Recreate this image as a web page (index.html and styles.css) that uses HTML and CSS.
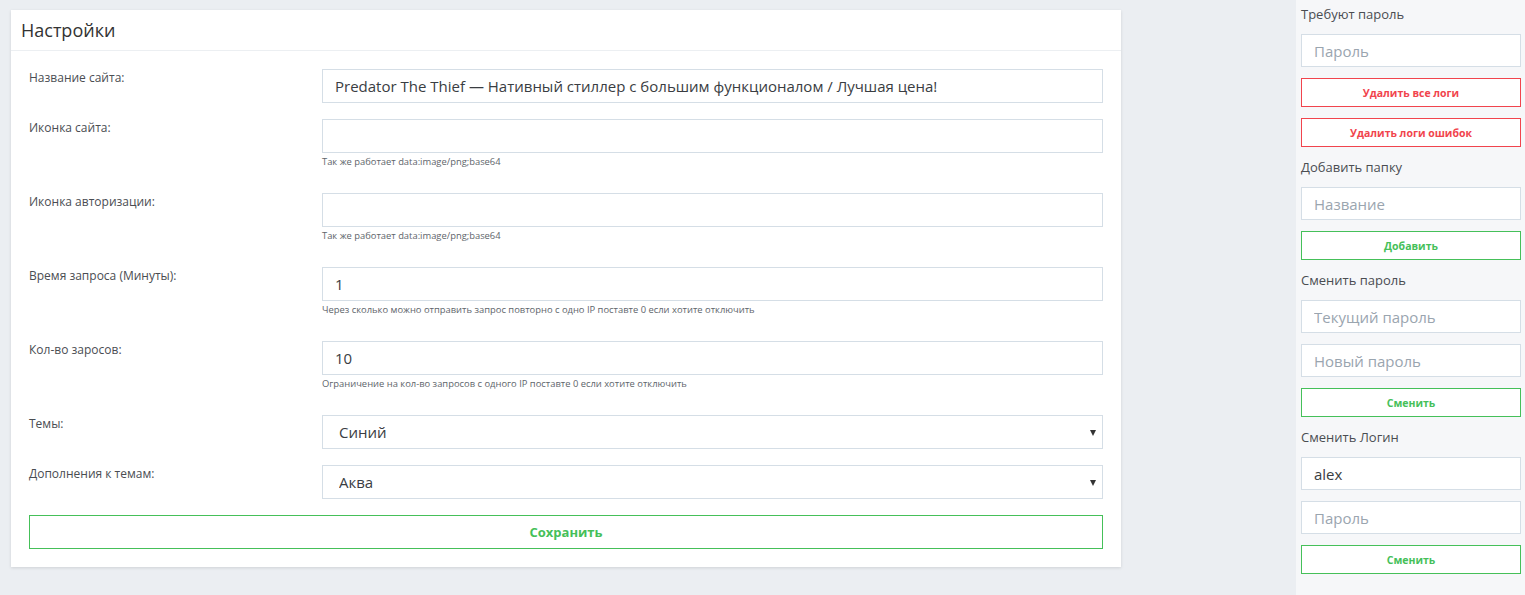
FILE: index.html
```html
<!DOCTYPE html>
<html lang="ru">
<head>
<meta charset="utf-8">
<title>Настройки</title>
<link rel="stylesheet" href="styles.css">
</head>
<body>
<div class="layout">
  <main class="main">
    <section class="card">
      <header class="card-head">Настройки</header>
      <form class="card-body">
        <div class="row">
          <label class="row-label">Название сайта:</label>
          <div class="field"><input class="input" type="text" value="Predator The Thief — Нативный стиллер с большим функционалом / Лучшая цена!"></div>
        </div>
        <div class="row">
          <label class="row-label">Иконка сайта:</label>
          <div class="field"><input class="input" type="text" value=""><small class="help">Так же работает data:image/png;base64</small></div>
        </div>
        <div class="row">
          <label class="row-label">Иконка авторизации:</label>
          <div class="field"><input class="input" type="text" value=""><small class="help">Так же работает data:image/png;base64</small></div>
        </div>
        <div class="row">
          <label class="row-label">Время запроса (Минуты):</label>
          <div class="field"><input class="input" type="text" value="1"><small class="help">Через сколько можно отправить запрос повторно с одно IP поставте 0 если хотите отключить</small></div>
        </div>
        <div class="row">
          <label class="row-label">Кол-во заросов:</label>
          <div class="field"><input class="input" type="text" value="10"><small class="help">Ограничение на кол-во запросов с одного IP поставте 0 если хотите отключить</small></div>
        </div>
        <div class="row">
          <label class="row-label">Темы:</label>
          <div class="field"><div class="select-wrap"><select class="input select"><option>Синий</option></select></div></div>
        </div>
        <div class="row">
          <label class="row-label">Дополнения к темам:</label>
          <div class="field"><div class="select-wrap"><select class="input select"><option>Аква</option></select></div></div>
        </div>
        <button type="button" class="btn btn-green btn-save">Сохранить</button>
      </form>
    </section>
  </main>
  <aside class="sidebar">
    <div class="side-label">Требуют пароль</div>
    <input class="input side-input" type="password" placeholder="Пароль">
    <button type="button" class="btn btn-red side-btn">Удалить все логи</button>
    <button type="button" class="btn btn-red side-btn">Удалить логи ошибок</button>
    <div class="side-label">Добавить папку</div>
    <input class="input side-input" type="text" placeholder="Название">
    <button type="button" class="btn btn-green side-btn">Добавить</button>
    <div class="side-label">Сменить пароль</div>
    <input class="input side-input" type="password" placeholder="Текущий пароль">
    <input class="input side-input" type="password" placeholder="Новый пароль">
    <button type="button" class="btn btn-green side-btn">Сменить</button>
    <div class="side-label">Сменить Логин</div>
    <input class="input side-input" type="text" value="alex">
    <input class="input side-input" type="password" placeholder="Пароль">
    <button type="button" class="btn btn-green side-btn">Сменить</button>
  </aside>
</div>
</body>
</html>
```
FILE: styles.css
```css
* { box-sizing: border-box; }
html, body { margin: 0; padding: 0; }
body {
  background: #ebeef2;
  font-family: "Open Sans", "Liberation Sans", sans-serif;
  color: #3a3f44;
  height: 595px;
  overflow: hidden;
}
.layout { display: flex; height: 595px; }
.main { flex: 1; padding: 10px 0 0 11px; }
.card {
  width: 1110px;
  background: #fff;
  box-shadow: 0 1px 3px rgba(0,0,0,0.12);
}
.card-head {
  height: 41px;
  padding: 0 10px;
  display: flex;
  align-items: center;
  font-size: 18px;
  color: #333;
  border-bottom: 1px solid #eceff2;
}
.card-body { padding: 18px 18px 18px; display: flex; flex-direction: column; }
.row {
  display: grid;
  grid-template-columns: 293px 1fr;
  margin-bottom: 16px;
}
.row-label {
  font-size: 12px;
  line-height: 17px;
  color: #4a4d52;
  padding-top: 0;
}
.field { display: flex; flex-direction: column; }
.input {
  height: 34px;
  width: 100%;
  border: 1px solid #d5dee6;
  background: #fff;
  padding: 0 12px;
  font-family: inherit;
  font-size: 15px;
  color: #3a3d42;
  outline: none;
  border-radius: 0;
}
.input::placeholder { color: #9aa5af; }
.help {
  font-size: 9.4px;
  line-height: 11px;
  color: #60656b;
  margin: 3px 0 10px;
}
.select-wrap { position: relative; }
.select {
  appearance: none;
  -webkit-appearance: none;
  padding-left: 16px;
}
.select-wrap::after {
  content: "";
  position: absolute;
  right: 7px;
  top: 15px;
  width: 0; height: 0;
  border-left: 3.5px solid transparent;
  border-right: 3.5px solid transparent;
  border-top: 6px solid #333;
  pointer-events: none;
}
.btn {
  background: #fff;
  font-family: inherit;
  font-weight: 700;
  cursor: pointer;
  border-radius: 0;
}
.btn-green { border: 1px solid #45c059; color: #45c059; }
.btn-red { border: 1px solid #f1444d; color: #f1444d; }
.btn-save { height: 34px; width: 100%; font-size: 13px; }
.sidebar {
  width: 229px;
  background: #f6f7f9;
  padding: 5px 4px 0 5px;
  display: flex;
  flex-direction: column;
  gap: 11px;
}
.side-label {
  font-size: 13px;
  line-height: 18px;
  height: 18px;
  color: #4a4d52;
}
.side-input { height: 33px; flex: none; }
.side-btn { height: 29px; font-size: 10.5px; flex: none; }
```
